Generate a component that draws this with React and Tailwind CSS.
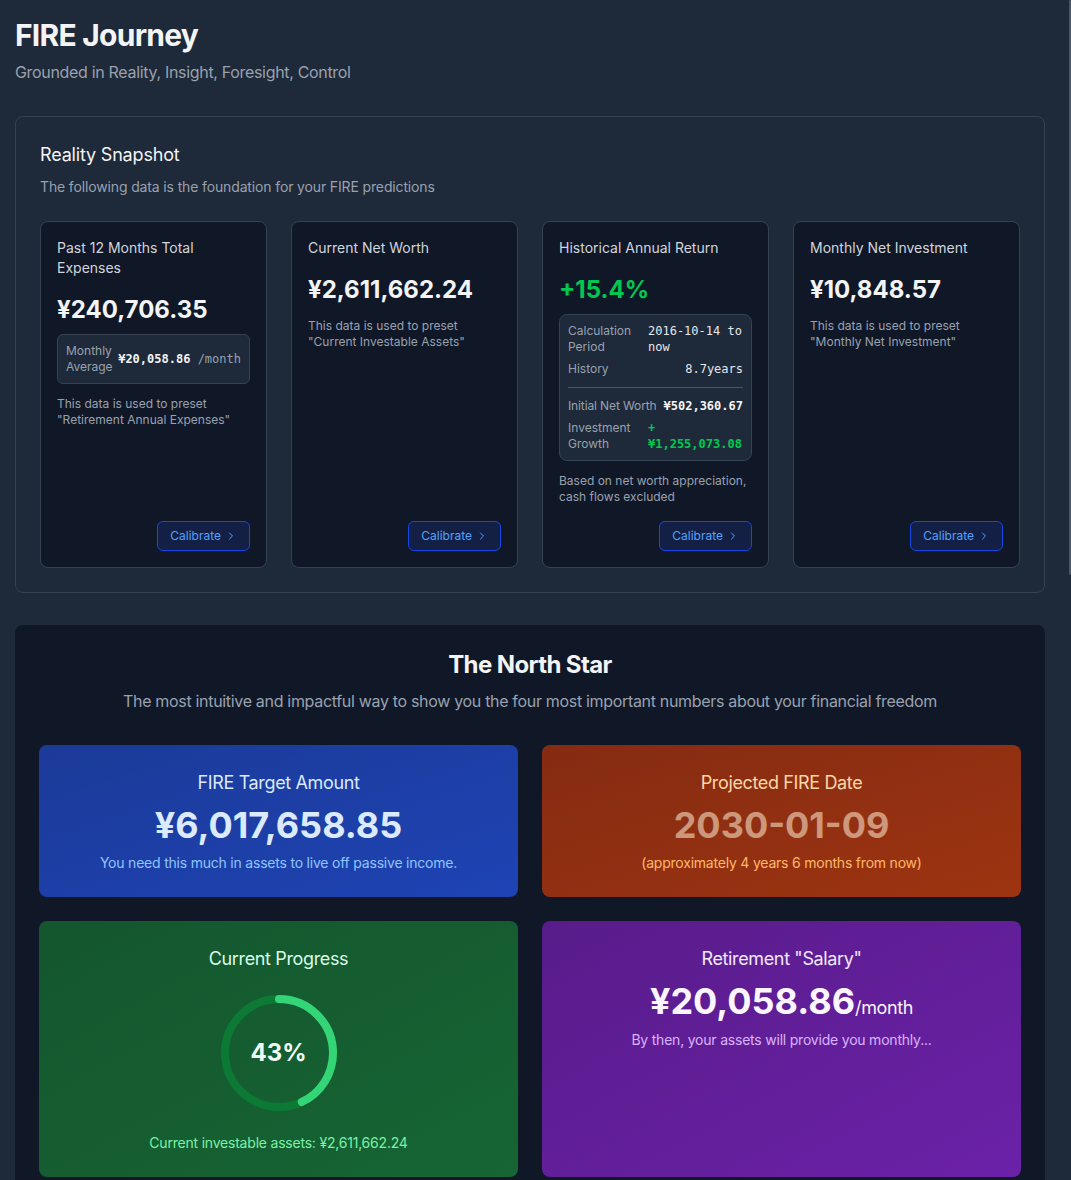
import React from 'react';
import { ChevronRight } from 'lucide-react';

const sans = { fontFamily: 'Inter, "Noto Sans", sans-serif' };
const mono = { fontFamily: '"DejaVu Sans Mono", monospace' };

// Calibrate button at the bottom of each snapshot card
const CalibrateButton = () => (
    <div className="mt-auto pt-3 flex justify-end">
        <button className="flex items-center gap-1 px-3 py-1.5 rounded-md border border-blue-700 bg-blue-950/60 text-blue-400 text-xs">
            Calibrate
            <ChevronRight size={12} />
        </button>
    </div>
);

const SnapshotCard = ({ title, value, valueClass = 'text-gray-100', children }) => (
    <div className="flex flex-col rounded-lg border border-gray-700 bg-gray-900 p-4 h-[347px]">
        <p className="text-sm text-gray-300">{title}</p>
        <p className={`mt-4 text-2xl font-bold ${valueClass}`}>{value}</p>
        {children}
        <CalibrateButton />
    </div>
);

const Row = ({ label, children, className = 'gap-2' }) => (
    <div className={`flex justify-between ${className}`}>
        <span className="text-gray-400">{label}</span>
        {children}
    </div>
);

const ProgressRing = ({ percent }) => {
    const r = 54;
    const c = 2 * Math.PI * r;
    return (
        <div className="relative w-[120px] h-[120px]">
            <svg width="120" height="120" viewBox="0 0 120 120" className="-rotate-90">
                <circle cx="60" cy="60" r={r} fill="none" stroke="#0c7a35" strokeWidth="8" />
                <circle
                    cx="60"
                    cy="60"
                    r={r}
                    fill="none"
                    stroke="#34d577"
                    strokeWidth="8"
                    strokeLinecap="round"
                    strokeDasharray={c}
                    strokeDashoffset={c * (1 - percent / 100)}
                />
            </svg>
            <div className="absolute inset-0 flex items-center justify-center text-2xl font-bold text-green-50">
                {percent}%
            </div>
        </div>
    );
};

export default function App() {
    return (
        <div className="min-h-screen bg-gray-800 text-gray-100" style={sans}>
            <div className="fixed top-0 right-0 w-[2px] h-[575px] bg-gray-600 rounded-full" />
            <div className="pl-[15px] pr-[26px] pt-[17px]">
                {/* Header */}
                <h1 className="text-3xl font-bold tracking-[-0.025em] text-gray-100">FIRE Journey</h1>
                <p className="mt-[7px] text-base tracking-[-0.02em] text-gray-400">Grounded in Reality, Insight, Foresight, Control</p>

                {/* Reality Snapshot */}
                <section className="mt-8 rounded-lg border border-gray-700 bg-gray-800 p-6">
                    <h2 className="text-lg tracking-[-0.01em] text-gray-100">Reality Snapshot</h2>
                    <p className="mt-2 text-sm tracking-[-0.01em] text-gray-400">The following data is the foundation for your FIRE predictions</p>

                    <div className="mt-6 grid grid-cols-4 gap-6">
                        <SnapshotCard title="Past 12 Months Total Expenses" value="¥240,706.35">
                            <div className="mt-2 flex items-center justify-between rounded-md border border-gray-700 bg-gray-800 p-2 text-xs">
                                <span className="text-gray-400">Monthly<br />Average</span>
                                <span style={mono}>
                                    <span className="font-bold text-gray-100">¥20,058.86</span>
                                    <span className="text-gray-400"> /month</span>
                                </span>
                            </div>
                            <p className="mt-3 text-xs text-gray-400">
                                This data is used to preset<br />"Retirement Annual Expenses"
                            </p>
                        </SnapshotCard>

                        <SnapshotCard title="Current Net Worth" value="¥2,611,662.24">
                            <p className="mt-3 text-xs text-gray-400">
                                This data is used to preset<br />"Current Investable Assets"
                            </p>
                        </SnapshotCard>

                        <SnapshotCard title="Historical Annual Return" value="+15.4%" valueClass="text-green-500">
                            <div className="mt-2 flex flex-col gap-1.5 rounded-lg border border-gray-700 bg-gray-800 p-2 text-xs">
                                <Row label="Calculation Period">
                                    <span className="w-[95px] shrink-0 text-gray-200" style={mono}>
                                        2016-10-14 to now
                                    </span>
                                </Row>
                                <Row label="History">
                                    <span className="text-gray-200" style={mono}>8.7years</span>
                                </Row>
                                <div className="my-1 border-t border-gray-600" />
                                <div className="flex justify-between whitespace-nowrap tracking-[-0.01em]">
                                    <span className="text-gray-400">Initial Net Worth</span>
                                    <span className="font-bold tracking-normal text-gray-100" style={mono}>¥502,360.67</span>
                                </div>
                                <Row label="Investment Growth">
                                    <span className="w-[95px] shrink-0 font-bold text-green-500" style={mono}>
                                        + ¥1,255,073.08
                                    </span>
                                </Row>
                            </div>
                            <p className="mt-3 text-xs text-gray-400">
                                Based on net worth appreciation, cash flows excluded
                            </p>
                        </SnapshotCard>

                        <SnapshotCard title="Monthly Net Investment" value="¥10,848.57">
                            <p className="mt-3 text-xs text-gray-400">
                                This data is used to preset<br />"Monthly Net Investment"
                            </p>
                        </SnapshotCard>
                    </div>
                </section>

                {/* The North Star */}
                <section className="mt-8 rounded-lg bg-gray-900 p-6 pb-10">
                    <h2 className="text-center text-2xl font-bold tracking-[-0.025em] text-gray-100">The North Star</h2>
                    <p className="mt-2 text-center text-base tracking-[-0.02em] text-gray-400">
                        The most intuitive and impactful way to show you the four most important numbers about your financial freedom
                    </p>

                    <div className="mt-8 grid grid-cols-2 gap-6">
                        <div className="rounded-lg bg-linear-to-br from-[#1b3a98] to-[#1e43b4] p-6 text-center">
                            <p className="text-lg tracking-[-0.02em] text-blue-100">FIRE Target Amount</p>
                            <p className="mt-2 text-4xl font-bold text-blue-100">¥6,017,658.85</p>
                            <p className="mt-2 text-sm tracking-[-0.015em] text-blue-300">You need this much in assets to live off passive income.</p>
                        </div>
                        <div className="rounded-lg bg-linear-to-br from-[#852b12] to-[#9d3410] p-6 text-center">
                            <p className="text-lg tracking-[-0.02em] text-orange-200">Projected FIRE Date</p>
                            <p className="mt-2 text-4xl font-bold text-orange-100/55">2030-01-09</p>
                            <p className="mt-2 text-sm tracking-[-0.015em] text-orange-300">(approximately 4 years 6 months from now)</p>
                        </div>
                        <div className="flex flex-col items-center rounded-lg bg-linear-to-br from-[#14562e] to-[#166534] p-6 text-center">
                            <p className="text-lg tracking-[-0.02em] text-green-100">Current Progress</p>
                            <div className="mt-5">
                                <ProgressRing percent={43} />
                            </div>
                            <p className="mt-5 text-sm tracking-[-0.015em] text-green-300">Current investable assets: ¥2,611,662.24</p>
                        </div>
                        <div className="rounded-lg bg-linear-to-br from-[#581c8a] to-[#6b21a8] p-6 text-center">
                            <p className="text-lg tracking-[-0.02em] text-purple-100">Retirement "Salary"</p>
                            <p className="mt-2 text-purple-50">
                                <span className="text-4xl font-bold">¥20,058.86</span>
                                <span className="text-lg tracking-[-0.02em]">/month</span>
                            </p>
                            <p className="mt-2 text-sm tracking-[-0.015em] text-purple-300">By then, your assets will provide you monthly...</p>
                        </div>
                    </div>
                </section>
            </div>
        </div>
    );
}
